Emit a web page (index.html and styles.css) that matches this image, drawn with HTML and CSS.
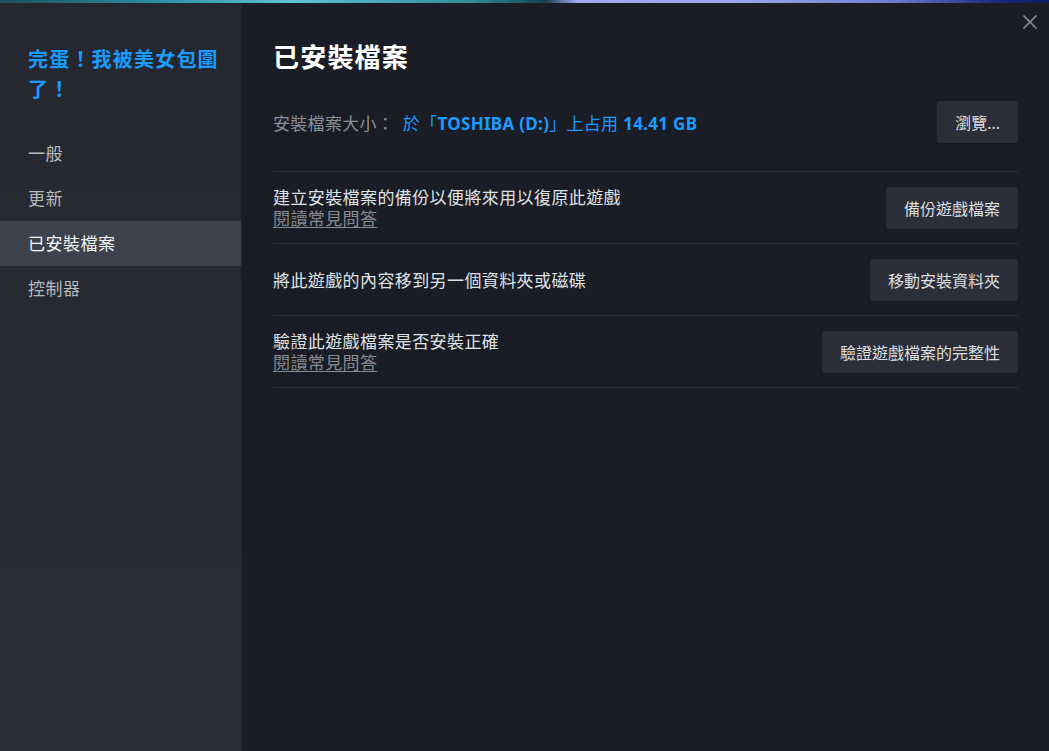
FILE: index.html
```html
<!DOCTYPE html>
<html lang="zh-Hant">
<head>
  <meta charset="UTF-8" />
  <title>已安裝檔案</title>
  <link rel="stylesheet" href="styles.css">
</head>
<body>
<div id="window">
  <div class="topStrip"></div>
  <div class="frame">
    <div id="sidebar">
      <h2 class="gameTitle">完蛋！我被美女包圍了！</h2>
      <div class="nav">
        <div class="navItem">一般</div>
        <div class="navItem">更新</div>
        <div class="navItem active">已安裝檔案</div>
        <div class="navItem">控制器</div>
      </div>
    </div>
    <div id="main">
      <h1 class="pageTitle">已安裝檔案</h1>
      <div class="sizeRow">
        <div class="sizeText">
          <span class="label">安裝檔案大小：</span>
          <span class="blue">於「<b>TOSHIBA (D:)</b>」上占用 <b>14.41 GB</b></span>
        </div>
        <button class="btn">瀏覽...</button>
      </div>
      <div class="actionRow">
        <div class="actionText">
          <div>建立安裝檔案的備份以便將來用以復原此遊戲</div>
          <a class="faq">閱讀常見問答</a>
        </div>
        <button class="btn">備份遊戲檔案</button>
      </div>
      <div class="actionRow">
        <div class="actionText">
          <div>將此遊戲的內容移到另一個資料夾或磁碟</div>
        </div>
        <button class="btn">移動安裝資料夾</button>
      </div>
      <div class="actionRow">
        <div class="actionText">
          <div>驗證此遊戲檔案是否安裝正確</div>
          <a class="faq">閱讀常見問答</a>
        </div>
        <button class="btn">驗證遊戲檔案的完整性</button>
      </div>
    </div>
  </div>
  <div id="closeBtn">
    <svg width="16" height="16" viewBox="0 0 16 16">
      <path d="M1.5 1.5 L14.5 14.5 M14.5 1.5 L1.5 14.5" stroke="#8e9197" stroke-width="1.6" fill="none"/>
    </svg>
  </div>
</div>
</body>
</html>
```

FILE: styles.css
```css
* {
  margin: 0;
  padding: 0;
  box-sizing: border-box;
}
html, body {
  width: 100%;
  height: 100%;
  overflow: hidden;
  background: #1b1d26;
  font-family: "Noto Sans", "Noto Sans CJK TC", sans-serif;
  color: #dcdedf;
}
#window {
  position: relative;
  display: flex;
  flex-direction: column;
  height: 100vh;
}
.topStrip {
  height: 3px;
  flex: none;
  background: linear-gradient(to right, #1d4f5c 0%, #2a8fa6 15%, #5ec4d8 28%, #2f8c98 45%, #15434f 52%, #a7a6f0 55%, #9ea7ea 70%, #6f7fd0 85%, #1a2a7a 95%, #0e1a5c 100%);
}
.frame {
  flex: 1;
  display: flex;
}
#sidebar {
  width: 242px;
  flex: none;
  background: linear-gradient(to bottom, #25272f, #2b2f37);
  padding-top: 42px;
  border-right: 1px solid #23252d;
}
.gameTitle {
  color: #1a9bff;
  font-size: 20px;
  font-weight: bold;
  line-height: 30px;
  padding: 0 20px 0 28px;
  letter-spacing: 1.2px;
}
.nav {
  margin-top: 26px;
}
.navItem {
  height: 45px;
  line-height: 45px;
  padding-left: 28px;
  font-size: 17px;
  letter-spacing: 0.5px;
  color: #b7bbc0;
}
.navItem.active {
  background: #3d424d;
  color: #f2f4f5;
}
#main {
  flex: 1;
  padding: 36px 31px 0 31px;
}
.pageTitle {
  font-size: 26px;
  font-weight: bold;
  line-height: 36px;
  color: #ffffff;
  letter-spacing: 1.2px;
}
.sizeRow {
  display: flex;
  justify-content: space-between;
  align-items: center;
  margin-top: 26px;
  padding-bottom: 28px;
  border-bottom: 1px solid #2b2e39;
}
.sizeText {
  font-size: 17px;
  letter-spacing: 0.3px;
}
.label {
  color: #8b8f96;
  margin-right: 4px;
}
.blue {
  color: #1a9bff;
}
.blue b {
  font-weight: bold;
}
.actionRow {
  display: flex;
  justify-content: space-between;
  align-items: center;
  padding: 15px 0 14px;
  border-bottom: 1px solid #2b2e39;
  font-size: 17px;
  letter-spacing: 0.4px;
  color: #dfe2e5;
}
.actionText {
  line-height: 21px;
}
.faq {
  display: block;
  color: #868b92;
  text-decoration: underline;
  text-underline-offset: 2px;
}
.btn {
  height: 42px;
  padding: 0 18px;
  border: none;
  border-radius: 3px;
  background: #2c2f39;
  color: #dcdedf;
  font-family: "Noto Sans", "Noto Sans CJK TC", sans-serif;
  font-size: 16px;
  cursor: pointer;
}
#closeBtn {
  position: absolute;
  top: 13px;
  right: 11px;
  width: 16px;
  height: 16px;
}
```
